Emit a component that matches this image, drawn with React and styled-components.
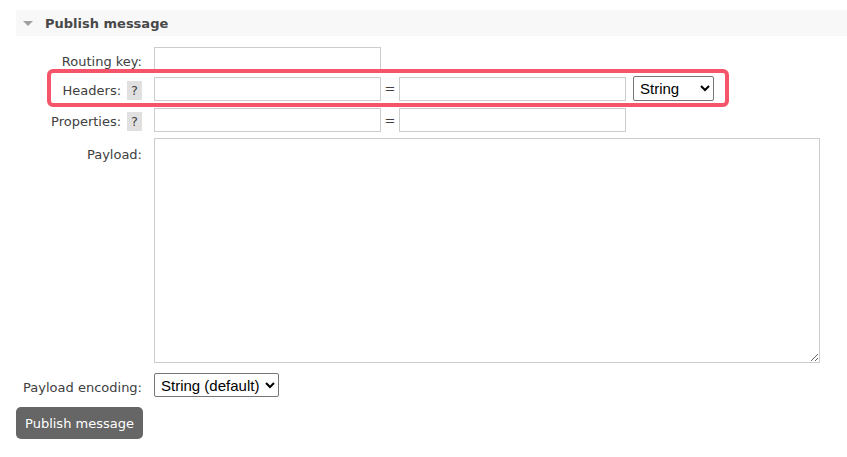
import React from 'react'
import styled, { createGlobalStyle } from 'styled-components'

const GlobalStyle = createGlobalStyle`
body {
  margin: 0;
  background: #fff;
  font-family: "DejaVu Sans", Verdana, sans-serif;
  font-size: 13px;
  color: #404040;
}
`

const Page = styled.div`
padding: 10px 0 0 16px;
`

const SectionHeader = styled.div`
height: 26px;
background-color: #f8f8f8;
display: flex;
align-items: center;
padding-left: 7px;
font-weight: bold;
color: #484848;
`

const Arrow = styled.span`
width: 0;
height: 0;
border-left: 5px solid transparent;
border-right: 5px solid transparent;
border-top: 5px solid #a0a0a0;
margin-right: 12px;
`

const Form = styled.div`
position: relative;
padding-top: 11px;
`

const Row = styled.div`
display: flex;
align-items: flex-start;
margin-top: ${({ $top }) => $top || 0}px;
`

const Label = styled.div`
width: 126px;
flex-shrink: 0;
margin-right: 12px;
text-align: right;
line-height: 16px;
padding-top: ${({ $pad }) => $pad}px;
white-space: nowrap;
`

const Help = styled.span`
display: inline-block;
margin-left: 6px;
padding: 2px 4px;
line-height: 15px;
background-color: #e0e0e0;
color: #404040;
`

const Field = styled.div`
display: flex;
align-items: center;
`

const Input = styled.input`
box-sizing: border-box;
width: 227px;
height: ${({ $h }) => $h || 24}px;
border: 1px solid #ccc;
border-radius: 0;
padding: 2px 4px;
margin: 0;
outline: none;
background: #fff;
`

const Eq = styled.span`
width: 18px;
text-align: center;
font-family: "DejaVu Sans", Verdana, sans-serif;
color: #404040;
`

const Select = styled.select`
box-sizing: border-box;
width: ${({ $w }) => $w}px;
height: ${({ $h }) => $h || 24}px;
margin: 0 0 0 ${({ $ml }) => $ml || 0}px;
padding: 0 2px;
border: 1px solid #767676;
border-radius: 2px;
background-color: #fff;
color: #000;
font-family: "Liberation Sans", Arial, sans-serif;
font-size: 15px;
`

const TextArea = styled.textarea`
box-sizing: border-box;
width: 666px;
height: 225px;
margin: 0;
border: 1px solid #ccc;
border-radius: 0;
outline: none;
resize: both;
`

const Button = styled.button`
margin-top: 10px;
width: 127px;
height: 32px;
padding: 0;
border: none;
border-radius: 5px;
background-color: #666;
color: #fff;
font-family: "DejaVu Sans", Verdana, sans-serif;
font-size: 13px;
cursor: pointer;
`

const Highlight = styled.div`
position: absolute;
left: 31px;
top: 33px;
width: 682px;
height: 38px;
box-sizing: border-box;
border: 4px solid #f5546a;
border-radius: 6px;
pointer-events: none;
`

const App = () => {
  return (
    <Page>
      <GlobalStyle />
      <SectionHeader>
        <Arrow />
        Publish message
      </SectionHeader>
      <Form>
        <Row>
          <Label $pad={7}>Routing key:</Label>
          <Input type="text" $h={25} />
        </Row>
        <Row $top={4}>
          <Label $pad={5}>
            Headers:<Help>?</Help>
          </Label>
          <Field>
            <Input type="text" />
            <Eq>=</Eq>
            <Input type="text" />
            <Select $w={81} $h={25} $ml={7} defaultValue="string">
              <option value="string">String</option>
              <option value="number">Number</option>
              <option value="boolean">Boolean</option>
              <option value="list">List</option>
            </Select>
          </Field>
        </Row>
        <Row $top={7}>
          <Label $pad={4}>
            Properties:<Help>?</Help>
          </Label>
          <Field>
            <Input type="text" />
            <Eq>=</Eq>
            <Input type="text" />
          </Field>
        </Row>
        <Row $top={6}>
          <Label $pad={9}>Payload:</Label>
          <TextArea />
        </Row>
        <Row $top={10}>
          <Label $pad={7}>Payload encoding:</Label>
          <Select $w={125} defaultValue="string">
            <option value="string">String (default)</option>
            <option value="base64">Base64</option>
          </Select>
        </Row>
        <Button>Publish message</Button>
        <Highlight />
      </Form>
    </Page>
  )
}

export default App
